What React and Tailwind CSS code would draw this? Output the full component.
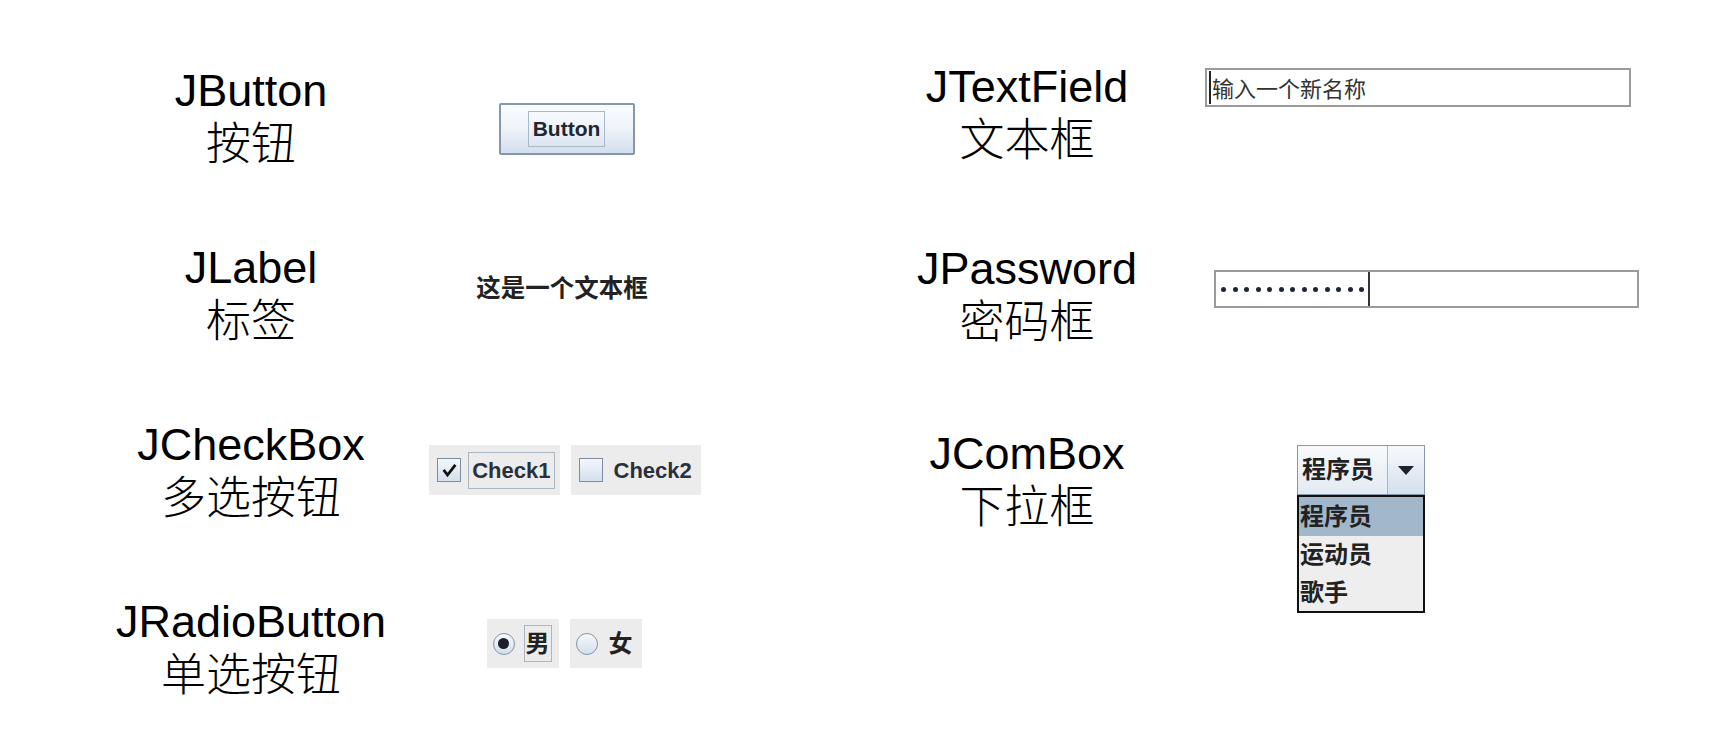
import React from 'react';

const widgetFont = "font-['Liberation_Sans','Noto_Sans_CJK_SC',sans-serif]";

// Titre du composant : nom Swing + nom chinois
function Caption({ en, zh }) {
  return (
    <div className="w-[300px] shrink-0 text-center text-black">
      <div className="font-['Liberation_Sans',Arial,sans-serif] text-[45px] leading-[50px]">{en}</div>
      <div className="font-['Noto_Sans_CJK_SC',sans-serif] font-light text-[45px] leading-[50px]">{zh}</div>
    </div>
  );
}

function CheckMark() {
  return (
    <svg width="15" height="15" viewBox="0 0 15 15">
      <path d="M2.5 8 L5.5 12 L12.5 3" fill="none" stroke="#111" strokeWidth="2.8" strokeLinecap="square" />
    </svg>
  );
}

function CheckItem({ label, checked, focused }) {
  return (
    <div className="h-[50px] bg-[#ececec] flex items-center pl-[8px] pr-[5px] gap-[7px]">
      <div className="w-[24px] h-[24px] border border-[#7d8da0] bg-linear-to-b from-[#f4f7fb] to-[#d4e0ec] flex items-center justify-center">
        {checked && <CheckMark />}
      </div>
      <div className={`h-[37px] flex items-center px-[3px] border ${focused ? 'border-[#a9b6c4]' : 'border-transparent'} text-[22px] font-bold text-[#2b313c]`}>
        {label}
      </div>
    </div>
  );
}

function RadioItem({ label, checked, focused }) {
  return (
    <div className="h-[49px] bg-[#ececec] flex items-center pl-[6px] pr-[7px] gap-[9px]">
      <div className="w-[22px] h-[22px] rounded-full border border-[#8595a8] bg-linear-to-b from-[#f7f9fc] to-[#d3deea] flex items-center justify-center">
        {checked && <div className="w-[11px] h-[11px] rounded-full bg-[#1c1f28]" />}
      </div>
      <div className={`h-[37px] flex items-center px-[1px] border ${focused ? 'border-[#a9b6c4]' : 'border-transparent'} text-[24px] font-bold text-[#222]`}>
        {label}
      </div>
    </div>
  );
}

export default function App() {
  return (
    <div className={`w-[1733px] h-[730px] bg-white overflow-hidden flex ${widgetFont}`}>
      {/* Colonne gauche */}
      <div className="pl-[101px] pt-[66px] flex flex-col">
        <div className="h-[177px] flex items-start">
          <Caption en="JButton" zh="按钮" />
          <div className="w-[326px] flex justify-center mt-[37px] pl-[5px]">
            <div className="w-[136px] h-[52px] border-2 border-[#8797aa] rounded-[2px] bg-linear-to-b from-[#fafcfe] via-[#eef3f9] to-[#d2dfed] flex items-center justify-center">
              <div className="h-[36px] flex items-center px-[4px] border border-[#a9b8c8] text-[21px] font-bold text-[#1f2733]">
                Button
              </div>
            </div>
          </div>
        </div>

        <div className="h-[177px] flex items-start">
          <Caption en="JLabel" zh="标签" />
          <div className="w-[326px] flex justify-center mt-[33px] pr-[4px]">
            <span className="text-[24.5px] leading-[25px] font-bold text-[#222]">这是一个文本框</span>
          </div>
        </div>

        <div className="h-[177px] flex items-start">
          <Caption en="JCheckBox" zh="多选按钮" />
          <div className="w-[326px] flex justify-center gap-[11px] mt-[25px] pl-[2px]">
            <CheckItem label="Check1" checked focused />
            <CheckItem label="Check2" />
          </div>
        </div>

        <div className="flex items-start">
          <Caption en="JRadioButton" zh="单选按钮" />
          <div className="w-[326px] flex justify-center gap-[11px] mt-[22px]">
            <RadioItem label="男" checked focused />
            <RadioItem label="女" />
          </div>
        </div>
      </div>

      {/* Colonne droite */}
      <div className="pl-[150px] pt-[62px] flex flex-col">
        <div className="h-[182px] flex items-start">
          <Caption en="JTextField" zh="文本框" />
          <div className="ml-[28px] mt-[6px] w-[426px] h-[39px] border-2 border-[#9a9a9a] bg-white flex items-center pl-[2px]">
            <div className="w-[2px] h-[33px] bg-[#222]" />
            <span className="ml-[1px] text-[22px] font-normal text-[#333] font-['Noto_Sans_CJK_SC',sans-serif]">输入一个新名称</span>
          </div>
        </div>

        <div className="h-[185px] flex items-start">
          <Caption en="JPassword" zh="密码框" />
          <div className="ml-[37px] mt-[26px] w-[425px] h-[38px] border-2 border-[#9a9a9a] bg-white flex items-center pl-[5px]">
            <div className="flex gap-[6.5px]">
              {Array.from({ length: 13 }).map((_, i) => (
                <div key={i} className="w-[5px] h-[5px] rounded-full bg-[#1d2535]" />
              ))}
            </div>
            <div className="ml-[4px] w-[2px] h-[34px] bg-[#333]" />
          </div>
        </div>

        <div className="flex items-start">
          <Caption en="JComBox" zh="下拉框" />
          <div className="ml-[120px] mt-[16px] w-[128px] flex flex-col">
            <div className="h-[50px] border border-[#8797aa] flex">
              <div className="w-[90px] bg-linear-to-b from-[#f8fafc] to-[#e3eaf2] border-r border-[#a9b6c4] flex items-center pl-[4px] text-[24px] font-bold text-[#222]">
                程序员
              </div>
              <div className="flex-1 bg-linear-to-b from-[#f6f9fc] to-[#d4e0ec] flex items-center justify-center">
                <svg width="16" height="9" viewBox="0 0 16 9">
                  <path d="M0 0 H16 L8 9 Z" fill="#1e2330" />
                </svg>
              </div>
            </div>
            <div className="h-[118px] border-2 border-[#111] bg-[#eeeeee] flex flex-col text-[24px] font-bold text-[#222]">
              <div className="h-[39px] bg-[#a3b7cb] flex items-center pl-[1px]">程序员</div>
              <div className="h-[38px] flex items-center pl-[1px]">运动员</div>
              <div className="h-[37px] flex items-center pl-[1px]">歌手</div>
            </div>
          </div>
        </div>
      </div>
    </div>
  );
}
